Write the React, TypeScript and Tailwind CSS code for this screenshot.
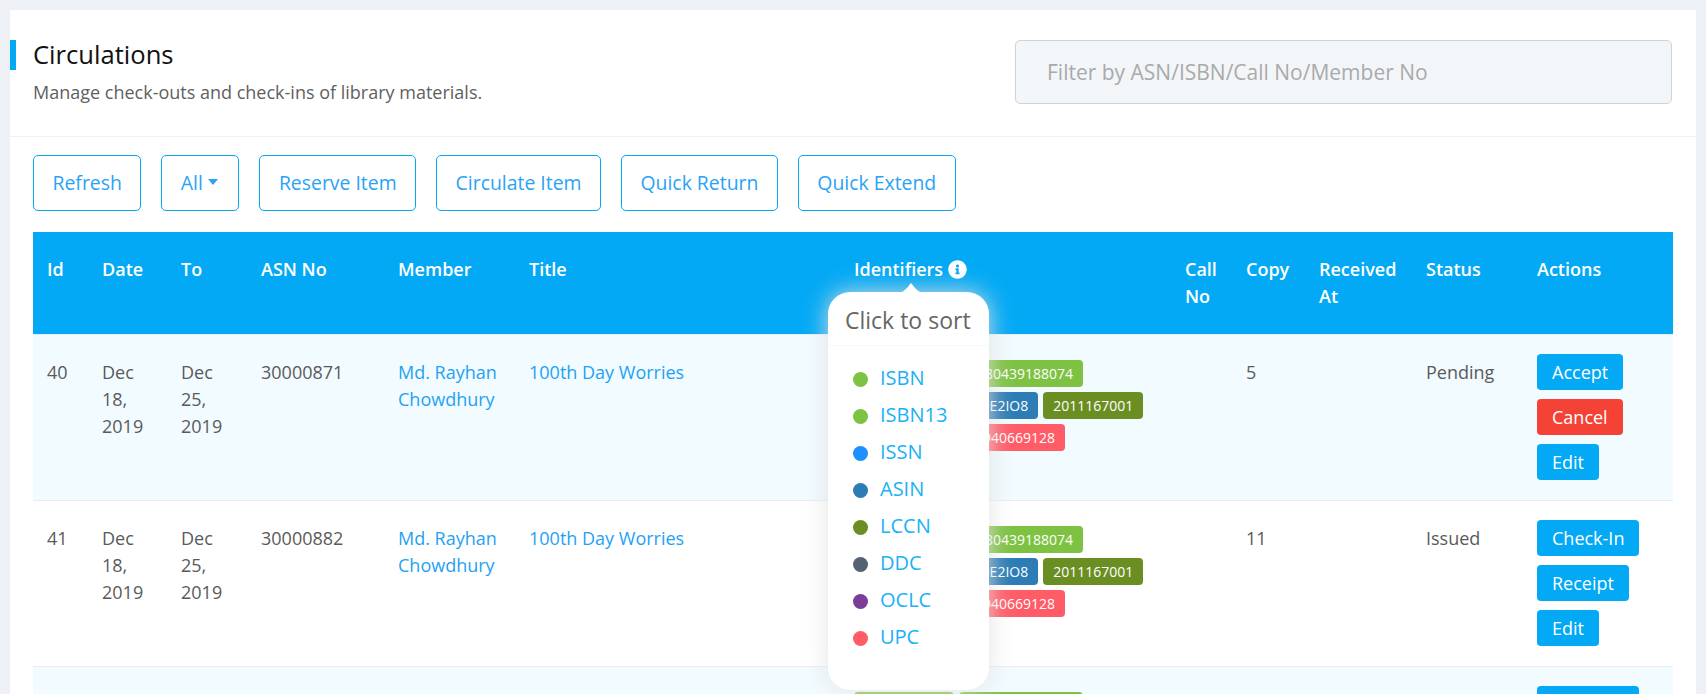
import React from 'react';
import { FaInfoCircle } from 'react-icons/fa';

const font = "font-['Open_Sans',sans-serif]";

const toolbar = ['Refresh', 'All', 'Reserve Item', 'Circulate Item', 'Quick Return', 'Quick Extend'];

const legend = [
  { name: 'ISBN', color: 'bg-[#7dc242]' },
  { name: 'ISBN13', color: 'bg-[#7dc242]' },
  { name: 'ISSN', color: 'bg-[#1e8fff]' },
  { name: 'ASIN', color: 'bg-[#2c7cb5]' },
  { name: 'LCCN', color: 'bg-[#6b8e23]' },
  { name: 'DDC', color: 'bg-[#556274]' },
  { name: 'OCLC', color: 'bg-[#7d3c98]' },
  { name: 'UPC', color: 'bg-[#ff5c67]' },
];

const Pills: React.FC = () => (
  <div className="flex flex-col gap-[5px] mt-[1px]">
    <div className="flex gap-[5px]">
      <span className="h-[27px] px-[10px] rounded text-[14px] leading-[27px] text-white bg-[#7dc242]">0439188074</span>
      <span className="h-[27px] px-[10px] rounded text-[14px] leading-[27px] text-white bg-[#7dc242]">9780439188074</span>
    </div>
    <div className="flex gap-[5px]">
      <span className="h-[27px] px-[9.5px] rounded text-[14px] leading-[27px] text-white bg-[#1e8fff]">1083-1234</span>
      <span className="h-[27px] px-[10px] rounded text-[14px] leading-[27px] text-white bg-[#2c7cb5]">B000E2IO8</span>
      <span className="h-[27px] px-[10px] rounded text-[14px] leading-[27px] text-white bg-[#6b8e23]">2011167001</span>
    </div>
    <div className="flex gap-[5px]">
      <span className="h-[27px] px-[9px] rounded text-[14px] leading-[27px] text-white bg-[#7d3c98]">435901987</span>
      <span className="h-[27px] px-[10px] rounded text-[14px] leading-[27px] text-white bg-[#ff5c67]">043940669128</span>
    </div>
  </div>
);

const ActionButton: React.FC<{ label: string; danger?: boolean; wide?: boolean }> = ({ label, danger, wide }) => (
  <button
    className={`h-[36px] px-[15px] rounded text-[18px] text-white ${danger ? 'bg-[#f44336]' : 'bg-[#03a9f4]'} ${wide ? 'w-[86px] text-left' : ''}`}
  >
    {label}
  </button>
);

const Row: React.FC<{
  id: number;
  to: string;
  asn: string;
  copy: number;
  status: string;
  actions: React.ReactNode;
  striped?: boolean;
}> = ({ id, to, asn, copy, status, actions, striped }) => (
  <tr className={`h-[166px] [&>td]:border-t [&>td]:border-[#e9ecef] align-top ${striped ? 'bg-[#f2fbff]' : 'bg-white'}`}>
    <td className="px-[14px] pt-[24px]">{id}</td>
    <td className="px-[14px] pt-[24px]">Dec 18, 2019</td>
    <td className="px-[14px] pt-[24px]">{to}</td>
    <td className="px-[14px] pt-[24px]">{asn}</td>
    <td className="pl-[14px] pt-[24px] text-[#1fa2f3]">Md. Rayhan Chowdhury</td>
    <td className="px-[14px] pt-[24px] text-[#1fa2f3]">100th Day Worries</td>
    <td className="pl-[14px] pt-[24px]">
      <Pills />
    </td>
    <td className="px-[14px] pt-[24px]"></td>
    <td className="px-[14px] pt-[24px]">{copy}</td>
    <td className="px-[14px] pt-[24px]"></td>
    <td className="px-[14px] pt-[24px]">{status}</td>
    <td className="pl-[14px] pt-[19px]">
      <div className="flex flex-col items-start gap-[9px]">{actions}</div>
    </td>
  </tr>
);

const SortPopover: React.FC = () => (
  <div className="absolute left-[795px] top-[60px] z-10 w-[161px] h-[398px] bg-white rounded-[22px] shadow-[0_0_24px_rgba(225,225,225,0.95)]">
    <svg className="absolute left-[66px] top-[-10px]" width="34" height="11" viewBox="0 0 34 11">
      <path d="M0 11 C8 11 10 9 13 6 L17 1 L21 6 C24 9 26 11 34 11 Z" fill="#fff" />
    </svg>
    <div className="h-[54px] pl-[17px] pt-[13px] border-b border-[#f8f8f8] text-[23px] leading-[30px] text-[#666]">
      Click to sort
    </div>
    <ul className="pl-[25px] pt-[15px]">
      {legend.map((item) => (
        <li key={item.name} className="h-[37px] flex items-center gap-[12px]">
          <span className={`w-[15px] h-[15px] rounded-full ${item.color}`}></span>
          <span className="text-[20px] text-[#1ab1f8] -mt-[4px]">{item.name}</span>
        </li>
      ))}
    </ul>
  </div>
);

export default function App() {
  return (
    <div className={`h-screen overflow-hidden bg-[#edf1f5] p-[10px] ${font}`}>
      <div className="bg-white h-[720px]">
        <div className="flex justify-between h-[127px] pt-[30px] pr-[24px] border-b border-[#eef0f2]">
          <div>
            <h2 className="h-[30px] border-l-[6px] border-[#03a9f4] pl-[17px] text-[25.6px] leading-[30px] text-[#111]">
              Circulations
            </h2>
            <p className="ml-[23px] mt-[9px] text-[18px] leading-[27px] text-[#5f5f5f]">
              Manage check-outs and check-ins of library materials.
            </p>
          </div>
          <input
            className="w-[657px] h-[64px] pl-[31px] bg-[#f2f6f9] border border-[#ced4da] rounded-[5px] text-[21px] placeholder:text-[#aaa]"
            placeholder="Filter by ASN/ISBN/Call No/Member No"
          />
        </div>

        <div className="flex gap-[20px] pl-[23px] pt-[18px]">
          {toolbar.map((label) => (
            <button
              key={label}
              className="h-[56px] px-[18.5px] flex items-center border border-[#03a9f4] rounded-[5px] text-[19.4px] text-[#2aa3f5]"
            >
              {label}
              {label === 'All' && (
                <span className="ml-[5px] mr-[2px] mb-[3px] border-t-[6px] border-x-[5px] border-t-[#2aa3f5] border-x-transparent"></span>
              )}
            </button>
          ))}
        </div>

        <div className="relative ml-[23px] mt-[21px] w-[1640px]">
          <table className="w-full table-fixed border-separate border-spacing-0 text-[18px] leading-[27px] text-[#5a5a5a]">
            <colgroup>
              <col className="w-[55px]" />
              <col className="w-[79px]" />
              <col className="w-[80px]" />
              <col className="w-[137px]" />
              <col className="w-[131px]" />
              <col className="w-[325px]" />
              <col className="w-[331px]" />
              <col className="w-[61px]" />
              <col className="w-[73px]" />
              <col className="w-[107px]" />
              <col className="w-[111px]" />
              <col className="w-[150px]" />
            </colgroup>
            <thead>
              <tr className="h-[102px] bg-[#03a9f5] text-white text-left align-top font-semibold">
                <th className="px-[14px] pt-[24px] font-semibold">Id</th>
                <th className="px-[14px] pt-[24px] font-semibold">Date</th>
                <th className="px-[14px] pt-[24px] font-semibold">To</th>
                <th className="px-[14px] pt-[24px] font-semibold">ASN No</th>
                <th className="px-[14px] pt-[24px] font-semibold">Member</th>
                <th className="px-[14px] pt-[24px] font-semibold">Title</th>
                <th className="px-[14px] pt-[24px] font-semibold">
                  <span className="flex items-center gap-[5px]">
                    Identifiers <FaInfoCircle size={19} />
                  </span>
                </th>
                <th className="px-[14px] pt-[24px] font-semibold">Call No</th>
                <th className="pl-[14px] pt-[24px] font-semibold">Copy</th>
                <th className="pl-[14px] pt-[24px] font-semibold">Received At</th>
                <th className="px-[14px] pt-[24px] font-semibold">Status</th>
                <th className="px-[14px] pt-[24px] font-semibold">Actions</th>
              </tr>
            </thead>
            <tbody>
              <Row
                striped
                id={40}
                to="Dec 25, 2019"
                asn="30000871"
                copy={5}
                status="Pending"
                actions={
                  <>
                    <ActionButton label="Accept" wide />
                    <ActionButton label="Cancel" danger wide />
                    <ActionButton label="Edit" />
                  </>
                }
              />
              <Row
                id={41}
                to="Dec 25, 2019"
                asn="30000882"
                copy={11}
                status="Issued"
                actions={
                  <>
                    <ActionButton label="Check-In" />
                    <ActionButton label="Receipt" />
                    <ActionButton label="Edit" />
                  </>
                }
              />
              <tr className="h-[166px] [&>td]:border-t [&>td]:border-[#e9ecef] align-top bg-[#f2fbff]">
                <td colSpan={6}></td>
                <td className="pl-[14px] pt-[24px]">
                  <Pills />
                </td>
                <td colSpan={4}></td>
                <td className="pl-[14px] pt-[19px]">
                  <ActionButton label="Check-In" />
                </td>
              </tr>
            </tbody>
          </table>
          <SortPopover />
        </div>
      </div>
    </div>
  );
}
